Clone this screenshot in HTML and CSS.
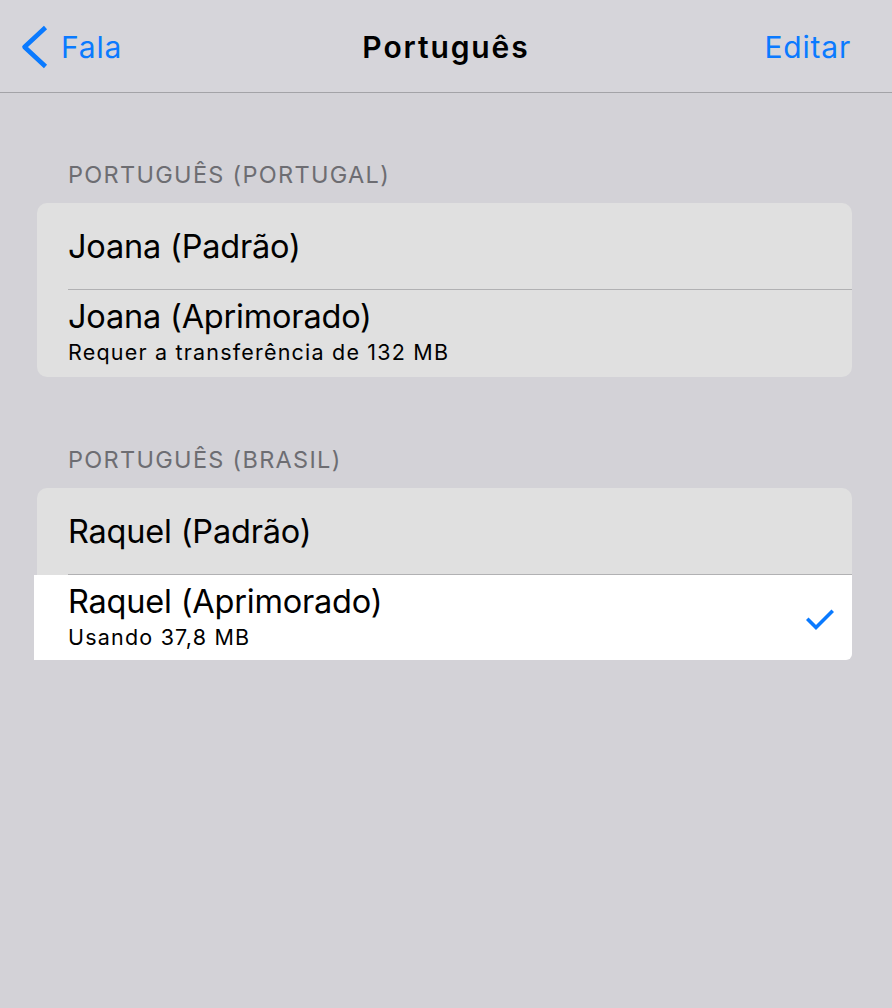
FILE: index.html
```html
<!DOCTYPE html>
<html lang="pt">
<head>
<meta charset="utf-8">
<title>Português</title>
<link rel="stylesheet" href="styles.css">
</head>
<body>
<header class="nav">
  <a class="nav-back" href="#">
    <svg class="chev" width="30" height="46" viewBox="0 0 30 46"><path d="M25.5 4.5 L4.5 24 L25.5 43.5" fill="none" stroke="#0a7aff" stroke-width="4.6" stroke-linecap="butt" stroke-linejoin="round"/></svg>
    <span>Fala</span>
  </a>
  <h1 class="nav-title">Português</h1>
  <a class="nav-action" href="#">Editar</a>
</header>
<main class="content">
  <section class="group">
    <h2 class="group-label">PORTUGUÊS (PORTUGAL)</h2>
    <ul class="card">
      <li class="row row-single"><span class="row-title">Joana (Padrão)</span></li>
      <li class="row row-double">
        <div class="row-text">
          <span class="row-title">Joana (Aprimorado)</span>
          <span class="row-sub">Requer a transferência de 132 MB</span>
        </div>
      </li>
    </ul>
  </section>
  <section class="group">
    <h2 class="group-label">PORTUGUÊS (BRASIL)</h2>
    <ul class="card">
      <li class="row row-single"><span class="row-title">Raquel (Padrão)</span></li>
      <li class="row row-double row-selected">
        <div class="row-text">
          <span class="row-title">Raquel (Aprimorado)</span>
          <span class="row-sub">Usando 37,8 MB</span>
        </div>
        <svg class="check" width="28" height="22" viewBox="0 0 28 22"><path d="M2.5 11 L10 18.5 L25.5 3" fill="none" stroke="#0a7aff" stroke-width="3.6" stroke-linecap="square"/></svg>
      </li>
    </ul>
  </section>
</main>
</body>
</html>
```

FILE: styles.css
```css
* { box-sizing: border-box; }
html, body {
  margin: 0;
  padding: 0;
}
body {
  width: 892px;
  height: 1008px;
  background: #d3d2d7;
  font-family: "Inter", "Liberation Sans", sans-serif;
  color: #000;
  overflow: hidden;
}
.nav {
  height: 93px;
  border-bottom: 1px solid #a3a3a7;
  background: #d6d5da;
  display: grid;
  grid-template-columns: 1fr auto 1fr;
  align-items: center;
  padding: 2px 20px 0 20px;
}
.nav a {
  color: #0a7aff;
  text-decoration: none;
  font-size: 30px;
  letter-spacing: 0.8px;
}
.nav-back {
  display: flex;
  align-items: center;
  gap: 11px;
  justify-self: start;
}
.chev { display: block; margin-top: -2px; }
.nav-title {
  margin: 0;
  font-size: 30px;
  font-weight: 600;
  letter-spacing: 1.9px;
}
.nav-action {
  justify-self: end;
  margin-right: 21px;
}
.content {
  padding-top: 67px;
}
.group { margin-bottom: 68px; }
.group-label {
  margin: 0 0 14px 68px;
  font-size: 23.5px;
  line-height: 29px;
  font-weight: 400;
  color: #6d6d72;
  letter-spacing: 1.3px;
}
.card {
  list-style: none;
  margin: 0 40px 0 37px;
  padding: 0;
  background: #e0e0e0;
  border-radius: 10px;
}
.row {
  display: flex;
  padding-left: 31px;
  position: relative;
}
.row-single {
  height: 87px;
  align-items: center;
}
.row-single::after {
  content: "";
  position: absolute;
  left: 31px;
  right: 0;
  bottom: 0;
  height: 1px;
  background: #b1b1b3;
}
.row-double {
  height: 87px;
  padding-top: 9px;
  align-items: flex-start;
}
.row-text {
  display: flex;
  flex-direction: column;
  flex: 1;
}
.row-title {
  font-size: 32.5px;
  line-height: 36px;
  letter-spacing: -0.2px;
}
.row-sub {
  margin-top: 3px;
  font-size: 21.5px;
  line-height: 28px;
  letter-spacing: 1.2px;
}
.row-selected {
  height: 85px;
  background: #ffffff;
  margin-left: -3px;
  padding-left: 34px;
  padding-right: 18px;
  border-radius: 0 0 6px 0;
}
.check { display: block; margin-top: 25px; }
```
